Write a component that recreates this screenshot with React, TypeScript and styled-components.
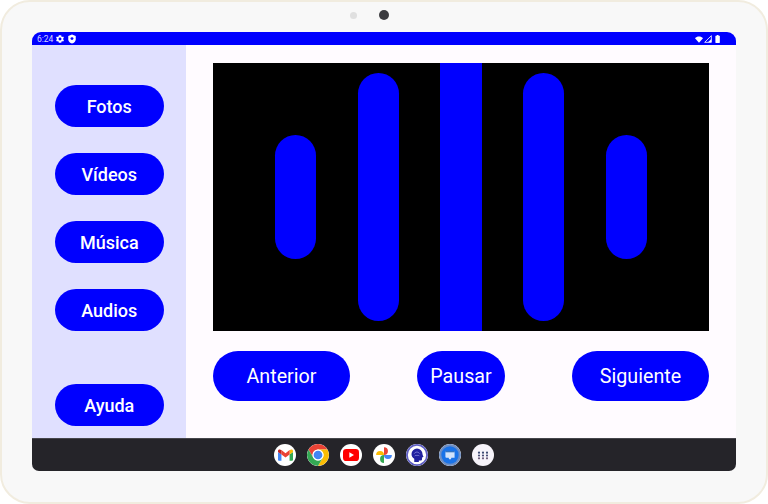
import React from "react";
import styled, { createGlobalStyle } from "styled-components";

const GlobalStyle = createGlobalStyle`
  html, body {
    margin: 0;
    padding: 0;
    width: 768px;
    height: 504px;
    overflow: hidden;
    background: #ffffff;
    font-family: Roboto, "Liberation Sans", sans-serif;
  }
  * { box-sizing: border-box; }
`;

const Tablet = styled.div`
  width: 768px;
  height: 504px;
  padding: 8px 30px 0 30px;
  background: #f8f8f8;
  border: 2px solid #f1ecdf;
  border-radius: 30px;
`;

const CameraRow = styled.div`
  height: 10px;
  margin-bottom: 12px;
  padding-left: 318px;
  display: flex;
  align-items: center;
  gap: 22px;
`;

const Sensor = styled.div`
  width: 7px;
  height: 7px;
  border-radius: 50%;
  background: #e0e0e0;
`;

const Camera = styled.div`
  width: 10px;
  height: 10px;
  border-radius: 50%;
  background: #3c3c40;
`;

const Screen = styled.div`
  width: 704px;
  height: 439px;
  display: flex;
  flex-direction: column;
  border-radius: 9px 9px 7px 7px;
  overflow: hidden;
  background: #fffbff;
`;

const StatusBar = styled.div`
  height: 13px;
  flex: none;
  background: #0000ff;
  color: #d5d5ff;
  display: flex;
  align-items: center;
  justify-content: space-between;
  padding: 1px 16px 0 5px;
  font-size: 8.5px;
  line-height: 12px;
`;

const StatusGroup = styled.div<{ $gap: number }>`
  display: flex;
  align-items: center;
  gap: ${(p) => p.$gap}px;
`;

const Main = styled.div`
  flex: 1;
  display: flex;
  min-height: 0;
`;

const Sidebar = styled.nav`
  width: 154px;
  flex: none;
  background: #e0e0ff;
  padding: 39.5px 22px 12.5px 22.5px;
  display: flex;
  flex-direction: column;
  gap: 26px;
`;

const SideButton = styled.div<{ $push?: boolean }>`
  height: 42px;
  flex: none;
  padding-top: 1px;
  border-radius: 21px;
  background: #0000ff;
  color: #ffffff;
  font-size: 18px;
  font-weight: 500;
  display: flex;
  align-items: center;
  justify-content: center;
  margin-top: ${(p) => (p.$push ? "auto" : "0")};
`;

const Content = styled.main`
  flex: 1;
  padding: 18px 27px 0 27px;
  display: flex;
  flex-direction: column;
  gap: 19.5px;
`;

const Visualizer = styled.div`
  height: 268px;
  flex: none;
  background: #000000;
  display: flex;
  align-items: center;
  justify-content: center;
  gap: 41.5px;
`;

const Bar = styled.div<{ $height: number; $square?: boolean }>`
  width: 41.33px;
  height: ${(p) => p.$height}px;
  background: #0000ff;
  border-radius: ${(p) => (p.$square ? "0" : "20.7px")};
`;

const Controls = styled.div`
  display: flex;
  justify-content: space-between;
`;

const ControlButton = styled.div<{ $width: number }>`
  width: ${(p) => p.$width}px;
  height: 50px;
  padding-top: 1px;
  border-radius: 25px;
  background: #0000ff;
  color: #ffffff;
  font-size: 19.7px;
  display: flex;
  align-items: center;
  justify-content: center;
`;

const Dock = styled.div`
  height: 33px;
  flex: none;
  background: #252429;
  border-top: 1px solid #46464c;
  display: flex;
  align-items: center;
  justify-content: center;
  gap: 11px;
`;

const DockIcon = styled.div<{ $bg?: string }>`
  width: 22px;
  height: 22px;
  border-radius: 50%;
  background: ${(p) => p.$bg ?? "#ffffff"};
  display: flex;
  align-items: center;
  justify-content: center;
  overflow: hidden;
`;

const GearIcon = () => (
  <svg width="10" height="10" viewBox="0 0 24 24" fill="#ffffff">
    <path d="M19.4 13a7.5 7.5 0 0 0 0-2l2.1-1.6-2-3.5-2.5 1a7.6 7.6 0 0 0-1.7-1L15 3.200h-6l-.4 2.700a7.6 7.6 0 0 0-1.700 1l-2.500-1-2 3.500L4.600 11a7.500 7.500 0 0 0 0 2l-2.100 1.600 2 3.500 2.500-1c.5.4 1.100.7 1.700 1l.4 2.700h6l.4-2.700c.6-.3 1.200-.6 1.700-1l2.500 1 2-3.500L19.400 13zM12 15.500a3.500 3.500 0 1 1 0-7 3.500 3.500 0 0 1 0 7z" />
  </svg>
);

const ShieldIcon = () => (
  <svg width="10" height="10" viewBox="0 0 24 24">
    <path d="M12 1l9 3.500v8c0 5-3.800 9-9 10.500-5.200-1.500-9-5.500-9-10.500v-8L12 1z" fill="#ffffff" />
    <circle cx="12" cy="11" r="3.500" fill="#0000ff" />
  </svg>
);

const WifiIcon = () => (
  <svg width="8" height="7" viewBox="0 0 24 20" fill="#ffffff">
    <path d="M12 20L0 6.500C3 3 7.500 1 12 1s9 2 12 5.500L12 20z" />
  </svg>
);

const SignalIcon = () => (
  <svg width="8" height="8" viewBox="0 0 24 24">
    <path d="M22 2v20H2L22 2z" fill="none" stroke="#ffffff" strokeWidth="2.500" />
    <path d="M22 12v10H12l10-10z" fill="#ffffff" />
  </svg>
);

const BatteryIcon = () => (
  <svg width="7" height="8" viewBox="-5 0 15 18" fill="#ffffff">
    <path d="M3 0h4v1.500h2a1 1 0 0 1 1 1V17a1 1 0 0 1-1 1H1a1 1 0 0 1-1-1V2.500a1 1 0 0 1 1-1h2V0z" />
  </svg>
);

const GmailIcon = () => (
  <svg width="15" height="12" viewBox="0 0 24 18">
    <path d="M1.500 18H5.500V8L0 4V16.500A1.500 1.500 0 0 0 1.500 18z" fill="#4285f4" />
    <path d="M18.500 18h4a1.500 1.500 0 0 0 1.500-1.500V4l-5.500 4v10z" fill="#34a853" />
    <path d="M18.500 1v7L24 4V2.500C24 .600 21.800-.500 20.300.700L18.500 1z" fill="#fbbc04" />
    <path d="M5.500 8V1L12 6l6.500-5v7L12 12.800 5.500 8z" fill="#ea4335" />
    <path d="M0 2.500V4l5.500 4V1L3.700.700C2.200-.500 0 .600 0 2.500z" fill="#c5221f" />
  </svg>
);

const ChromeIcon = () => (
  <svg width="22" height="22" viewBox="0 0 48 48">
    <path d="M24 0A24 24 0 0 1 44.780 12H24A12 12 0 0 0 13.600 30L3.220 12A24 24 0 0 1 24 0z" fill="#ea4335" />
    <path d="M44.780 12A24 24 0 0 1 24 48L34.400 30A12 12 0 0 0 24 12z" fill="#fbbc04" />
    <path d="M3.220 12A24 24 0 0 0 24 48L34.400 30A12 12 0 0 1 13.600 30z" fill="#34a853" />
    <circle cx="24" cy="24" r="12" fill="#ffffff" />
    <circle cx="24" cy="24" r="9.500" fill="#4285f4" />
  </svg>
);

const YoutubeIcon = () => (
  <svg width="16" height="12" viewBox="0 0 24 18">
    <rect width="24" height="18" rx="5" fill="#ff0000" />
    <path d="M9.500 5l7 4-7 4V5z" fill="#ffffff" />
  </svg>
);

const PhotosIcon = () => (
  <svg width="18" height="18" viewBox="0 0 24 24">
    <path d="M12 12H1.500A5.250 5.250 0 0 1 6.750 6.750 5.250 5.250 0 0 1 12 12z" fill="#fbbc04" />
    <path d="M12 12V1.500A5.250 5.250 0 0 1 17.250 6.750 5.250 5.250 0 0 1 12 12z" fill="#ea4335" />
    <path d="M12 12h10.500A5.250 5.250 0 0 1 17.250 17.250 5.250 5.250 0 0 1 12 12z" fill="#4285f4" />
    <path d="M12 12v10.500A5.250 5.250 0 0 1 6.750 17.250 5.250 5.250 0 0 1 12 12z" fill="#34a853" />
  </svg>
);

const BrainIcon = () => (
  <svg width="22" height="22" viewBox="0 0 24 24">
    <circle cx="12" cy="12" r="11" fill="#ffffff" stroke="#5f5fc4" strokeWidth="2" />
    <path d="M12 5a6 6 0 0 1 6 6c0 1.300 1.300 2.600.9 3.100l-1.400.5v2.100a1.300 1.300 0 0 1-1.300 1.300H14v1.500H9v-3.500C7 15 6 13.300 6 11a6 6 0 0 1 6-6z" fill="#2222a0" />
    <path d="M9 10.500c1-2 2-1 3-2 1 1 2 .5 3 2M9.500 13c1-1 2 0 2.500-1 .8 1 1.500.2 2.500.8" fill="none" stroke="#9a9ae8" strokeWidth="0.800" />
  </svg>
);

const MessagesIcon = () => (
  <svg width="22" height="22" viewBox="0 0 24 24">
    <circle cx="12" cy="12" r="12" fill="#6f8fc4" />
    <circle cx="12" cy="12" r="9.500" fill="#1a73e8" />
    <path d="M7 8h10v7h-3.500l-.5 1.500h-2l-.5-1.500H8a1 1 0 0 1-1-1V8z" fill="#d2e3fc" />
    <path d="M7 8h10v1H7z" fill="#0b57b0" />
  </svg>
);

const dotColors = ["#3c4a73", "#474c78", "#6b5a7a"];

const LauncherIcon = () => (
  <svg width="12" height="9" viewBox="0 0 12 9">
    {dotColors.flatMap((color, row) =>
      [0, 1, 2].map((col) => (
        <circle
          key={`${row}-${col}`}
          cx={2 + col * 4}
          cy={1.700 + row * 2.800}
          r="1.100"
          fill={color}
        />
      ))
    )}
  </svg>
);

const sideItems = ["Fotos", "Vídeos", "Música", "Audios"];

export default function App() {
  return (
    <>
      <GlobalStyle />
      <Tablet>
        <CameraRow>
          <Sensor />
          <Camera />
        </CameraRow>
        <Screen>
          <StatusBar>
            <StatusGroup $gap={2}>
              <span>6:24</span>
              <GearIcon />
              <ShieldIcon />
            </StatusGroup>
            <StatusGroup $gap={1}>
              <WifiIcon />
              <SignalIcon />
              <BatteryIcon />
            </StatusGroup>
          </StatusBar>
          <Main>
            <Sidebar>
              {sideItems.map((item) => (
                <SideButton key={item}>{item}</SideButton>
              ))}
              <SideButton $push>Ayuda</SideButton>
            </Sidebar>
            <Content>
              <Visualizer>
                <Bar $height={124} />
                <Bar $height={248} />
                <Bar $height={268} $square />
                <Bar $height={248} />
                <Bar $height={124} />
              </Visualizer>
              <Controls>
                <ControlButton $width={137}>Anterior</ControlButton>
                <ControlButton $width={88}>Pausar</ControlButton>
                <ControlButton $width={137}>Siguiente</ControlButton>
              </Controls>
            </Content>
          </Main>
          <Dock>
            <DockIcon><GmailIcon /></DockIcon>
            <DockIcon><ChromeIcon /></DockIcon>
            <DockIcon><YoutubeIcon /></DockIcon>
            <DockIcon><PhotosIcon /></DockIcon>
            <DockIcon><BrainIcon /></DockIcon>
            <DockIcon><MessagesIcon /></DockIcon>
            <DockIcon $bg="#f6f3fa"><LauncherIcon /></DockIcon>
          </Dock>
        </Screen>
      </Tablet>
    </>
  );
}
